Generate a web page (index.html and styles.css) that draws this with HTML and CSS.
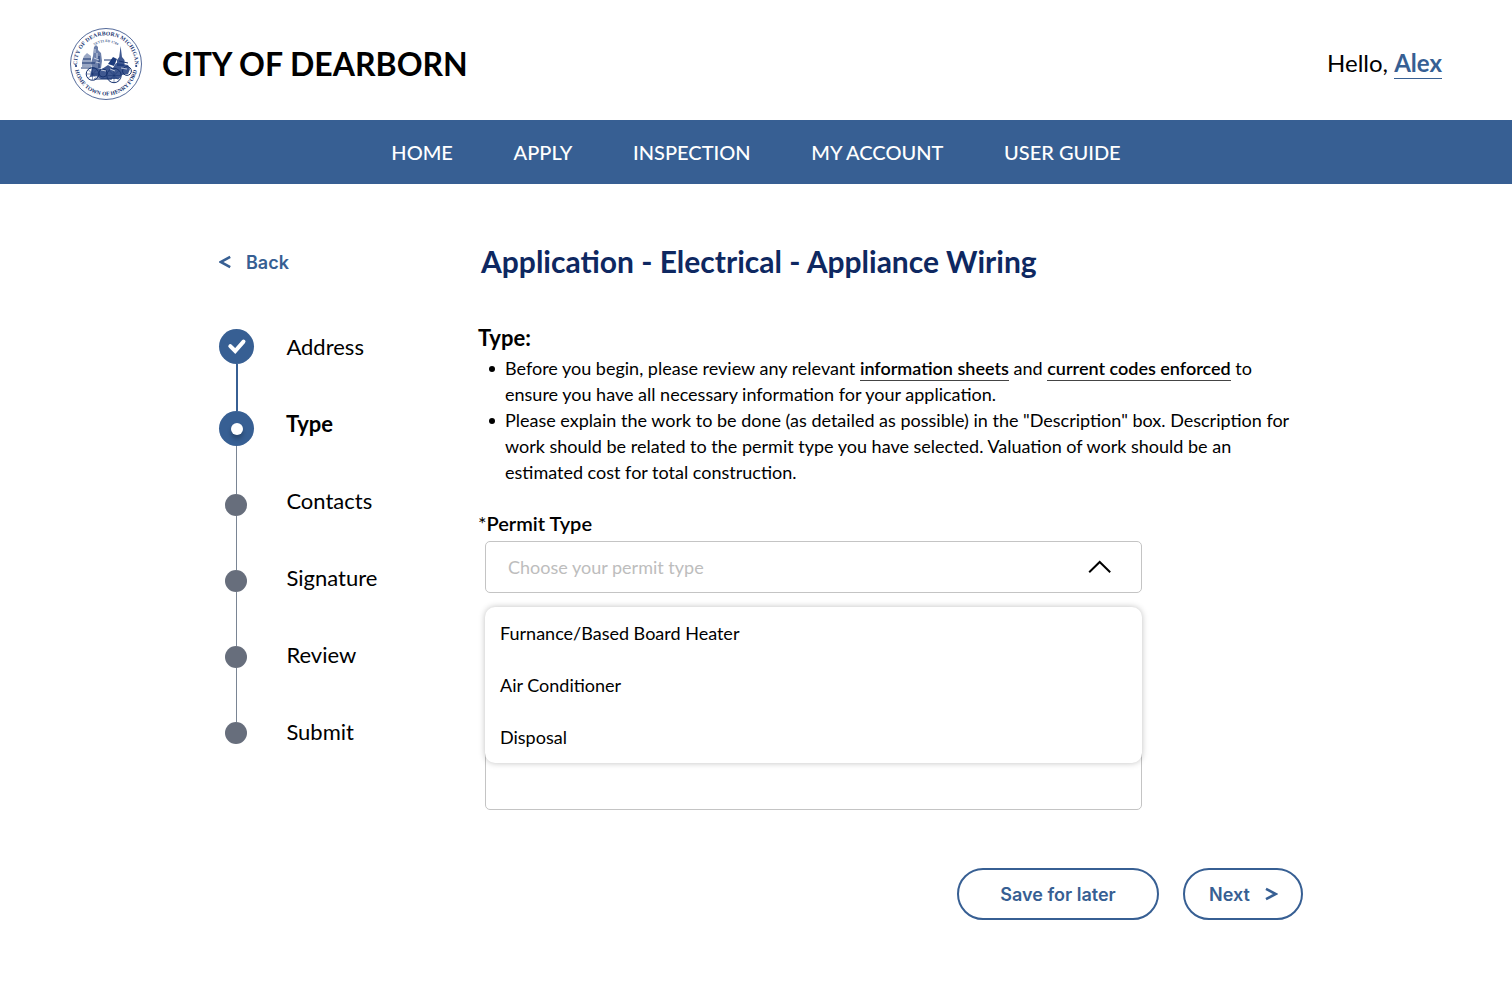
FILE: index.html
```html
<!DOCTYPE html>
<html lang="en">
<head>
<meta charset="utf-8">
<title>City of Dearborn - Application</title>
<link rel="stylesheet" href="styles.css">
</head>
<body>
<header class="header">
  <div class="brand">
    <svg class="seal" viewBox="0 0 72 72" width="72" height="72">
      <defs>
        <path id="arc-top" d="M7.7 42 A28.9 28.9 0 1 1 64.3 42"/>
        <path id="arc-bottom" d="M4.5 36 A31.5 31.5 0 0 0 67.5 36"/>
        <path id="arc-inner" d="M17 25 A22 22 0 0 1 55 25"/>
      </defs>
      <circle class="seal-ring" cx="36" cy="36" r="35.5"/>
      <text class="seal-text seal-top"><textPath href="#arc-top" startOffset="50%" text-anchor="middle">CITY OF DEARBORN MICHIGAN</textPath></text>
      <text class="seal-text"><textPath href="#arc-bottom" startOffset="50%" text-anchor="middle">HOME TOWN OF HENRY FORD</textPath></text>
      <text class="seal-small"><textPath href="#arc-inner" startOffset="50%" text-anchor="middle">SETTLED 1786</textPath></text>
      <g class="seal-fill">
        <circle cx="6" cy="38" r="1.1"/><circle cx="66.2" cy="38" r="1.1"/>
        <path d="M50.6 18 L52 29 L54.5 32 V38 H47 V32 L49.2 29Z" opacity=".85"/>
        <path d="M24 19 l2-2 2 2 v3 l3 3 1 8 -1 7 -9 1 -1-6 2-7Z" opacity=".65"/>
        <path d="M14 28 l3-3 4 3 v11 h-9 v-6Z" opacity=".45"/>
        <path d="M22 39 l10 2 6-4 5 3 3-5 6 1 6 1 2 4 -2 5 -6 1 -3 4 H31 l-5-3 -6 1Z" opacity=".85"/>
        <path d="M38 36 l5-7 4 2 -3 7Z"/>
      </g>
      <g class="seal-line">
        <circle cx="22.5" cy="46" r="6.3"/><circle cx="44" cy="47.5" r="7.2"/>
        <circle cx="57" cy="43" r="4.4"/><circle cx="33" cy="45" r="4"/>
        <path d="M22.5 40v12M16.5 46h12M18.2 41.7l8.6 8.6M26.8 41.7l-8.6 8.6M44 41v13M37.5 47.5h13M39.3 42.8l9.4 9.4M48.7 42.8l-9.4 9.4" stroke-width=".5"/>
        <path d="M11 40h10M12 35h13M13 31h8M29 28v12M34 32h8M49 33l9 2M24 51h18"/>
      </g>
      <path class="seal-light" d="M25 21v4M27 25v5M24 30l5 2M26 34l4 1M31 42l5 1M40 41l5 2M51 40l6 1"/>
    </svg>
    <h1 class="brand-name">CITY OF DEARBORN</h1>
  </div>
  <div class="greeting">Hello, <a class="user">Alex</a></div>
</header>
<nav class="nav">
  <a>HOME</a><a>APPLY</a><a>INSPECTION</a><a>MY ACCOUNT</a><a>USER GUIDE</a>
</nav>
<main class="main">
  <aside class="side">
    <a class="back"><svg width="12" height="14" viewBox="0 0 12 14"><path d="M11.2 1.9 L1.6 7 L11.2 12.1"/></svg><span>Back</span></a>
    <div class="stepper">
      <div class="rail">
        <span class="node"><svg width="35" height="35" viewBox="0 0 35 35"><path d="M11.3 17.1 L16.2 22 L24.5 12.6"/></svg></span>
        <span class="link link-done"></span>
        <span class="node"><span class="hole"></span></span>
        <span class="link link-first"></span>
        <span class="dot"></span><span class="link"></span>
        <span class="dot"></span><span class="link"></span>
        <span class="dot"></span><span class="link"></span>
        <span class="dot"></span>
      </div>
      <ol class="steps">
        <li>Address</li><li class="current">Type</li><li>Contacts</li><li>Signature</li><li>Review</li><li>Submit</li>
      </ol>
    </div>
  </aside>
  <section class="content">
    <h2 class="title">Application - Electrical - Appliance Wiring</h2>
    <h3 class="subtitle">Type:</h3>
    <ul class="notes">
      <li>Before you begin, please review any relevant <a>information sheets</a> and <a>current codes enforced</a> to<br>ensure you have all necessary information for your application.</li>
      <li>Please explain the work to be done (as detailed as possible) in the "Description" box. Description for<br>work should be related to the permit type you have selected. Valuation of work should be an<br>estimated cost for total construction.</li>
    </ul>
    <div class="label"><span class="star">*</span>Permit Type</div>
    <div class="fields">
      <div class="select"><span>Choose your permit type</span>
        <svg width="24" height="14" viewBox="0 0 24 14"><path d="M1.2 12.3 L11.7 2 L22.2 12.3"/></svg>
      </div>
      <div class="textarea"></div>
      <ul class="menu"><li>Furnance/Based Board Heater</li><li>Air Conditioner</li><li>Disposal</li></ul>
    </div>
    <div class="actions">
      <button class="btn btn-save">Save for later</button>
      <button class="btn btn-next"><span>Next</span><svg width="13" height="14" viewBox="0 0 13 14"><path d="M1 1.9 L10.8 7 L1 12.1"/></svg></button>
    </div>
  </section>
</main>
</body>
</html>
```
FILE: styles.css
```css
* { box-sizing: border-box; }
body { margin: 0; background: #fff; color: #000; font-family: Lato, sans-serif; }
h1, h2, h3, ul, ol { margin: 0; padding: 0; }
ol, .menu { list-style: none; }

.header { height: 120px; padding: 8px 70px 0; display: flex; align-items: center; justify-content: space-between; }
.brand { display: flex; align-items: center; gap: 20px; }
.seal { display: block; }
.seal-ring { fill: none; stroke: #27427f; stroke-width: .8; }
.seal-text { font: bold 5.6px "Liberation Serif", serif; fill: #17336f; letter-spacing: .1px; }
.seal-top { font-size: 5.6px; letter-spacing: .15px; }
.seal-small { font: bold 3.4px "Liberation Serif", serif; fill: #3d5588; letter-spacing: .1px; }
.seal-fill { fill: #1d3b7c; }
.seal-line { fill: none; stroke: #17336f; stroke-width: 1; }
.seal-light { fill: none; stroke: #dfe5f0; stroke-width: .8; }
.brand-name { font-size: 32px; font-weight: 700; line-height: 40px; white-space: nowrap; }
.greeting { font-size: 24px; line-height: 30px; white-space: nowrap; margin-top: -2px; }
.user { color: #375f93; font-weight: 700; display: inline-block; border-bottom: 1px solid #375f93; }

.nav { height: 64px; background: #375f93; color: #fff; display: flex; justify-content: center; align-items: center; gap: 60.7px; font-size: 20px; font-weight: 500; }

.main { display: grid; grid-template-columns: 259px 825px; padding: 60px 0 0 219px; }
.back { display: flex; align-items: center; gap: 15px; height: 36px; color: #375f93; font: 600 18px/36px Inter, sans-serif; }
.back span { padding-top: 1px; }
.back svg { margin-left: -.5px; margin-right: .5px; }
.back svg path, .btn svg path { fill: none; stroke: #375f93; stroke-width: 2.6; }
.stepper { display: flex; gap: 32.4px; margin-top: 49px; }
.rail { width: 35px; display: flex; flex-direction: column; align-items: center; }
.node { width: 35px; height: 35px; border-radius: 50%; background: #375f93; display: flex; align-items: center; justify-content: center; }
.node path { fill: none; stroke: #fff; stroke-width: 4; stroke-linecap: round; }
.hole { width: 12px; height: 12px; border-radius: 50%; background: #fff; box-shadow: 0 4px 4px rgba(0,0,0,.25); }
.link { width: 1px; height: 54px; background: #7a8594; }
.link-done { width: 2px; height: 47px; background: #375f93; }
.link-first { height: 48px; }
.dot { width: 22px; height: 22px; border-radius: 50%; background: #676e7c; margin-right: 1px; }
.steps { display: flex; flex-direction: column; gap: 47px; padding-top: 3px; font-size: 22px; line-height: 30px; }
.current { font-weight: 700; margin-left: -.5px; }

.title { font-size: 30px; font-weight: 700; line-height: 34px; color: #0e2861; padding-left: 3px; white-space: nowrap; }
.subtitle { font-size: 22px; font-weight: 700; line-height: 28px; margin-top: 46px; }
.notes { font-size: 18px; line-height: 26px; padding-left: 27px; margin-top: 3px; white-space: nowrap; list-style: none; }
.notes > li { display: block; position: relative; }
.notes > li::before { content: ""; position: absolute; left: -16.5px; top: 11px; width: 6px; height: 6px; border-radius: 50%; background: #000; }
.notes a { font-weight: 600; display: inline-block; line-height: 23px; border-bottom: 1px solid #444; }
.label { font-size: 20px; font-weight: 600; line-height: 28px; margin-top: 24px; }
.star { font-weight: 400; }
.fields { position: relative; width: 657px; margin: 4px 0 0 7px; }
.select { height: 52px; border: 1px solid #c4c4c4; border-radius: 5px; display: flex; align-items: center; justify-content: space-between; padding: 0 29px 0 22px; font-size: 18px; color: #bdbdbd; }
.select path { fill: none; stroke: #000; stroke-width: 2; }
.textarea { height: 150px; margin-top: 67px; border: 1px solid #c4c4c4; border-radius: 5px; }
.menu { position: absolute; top: 66px; left: 0; width: 657px; background: #fff; border-radius: 10px; box-shadow: 0 0 6px rgba(0,0,0,.25); font-size: 18px; line-height: 52px; }
.menu li { height: 52px; padding: 0 15px; }
.actions { display: flex; gap: 24px; margin: 58px 0 0 479px; }
.btn { height: 52px; padding: 0; flex: none; background: #fff; border: 2px solid #375f93; border-radius: 26px; color: #375f93; font: 600 18px Inter, sans-serif; display: flex; align-items: center; justify-content: center; white-space: nowrap; }
.btn-save { width: 202px; }
.btn-next { width: 120px; gap: 15px; padding-left: 1px; }
```
